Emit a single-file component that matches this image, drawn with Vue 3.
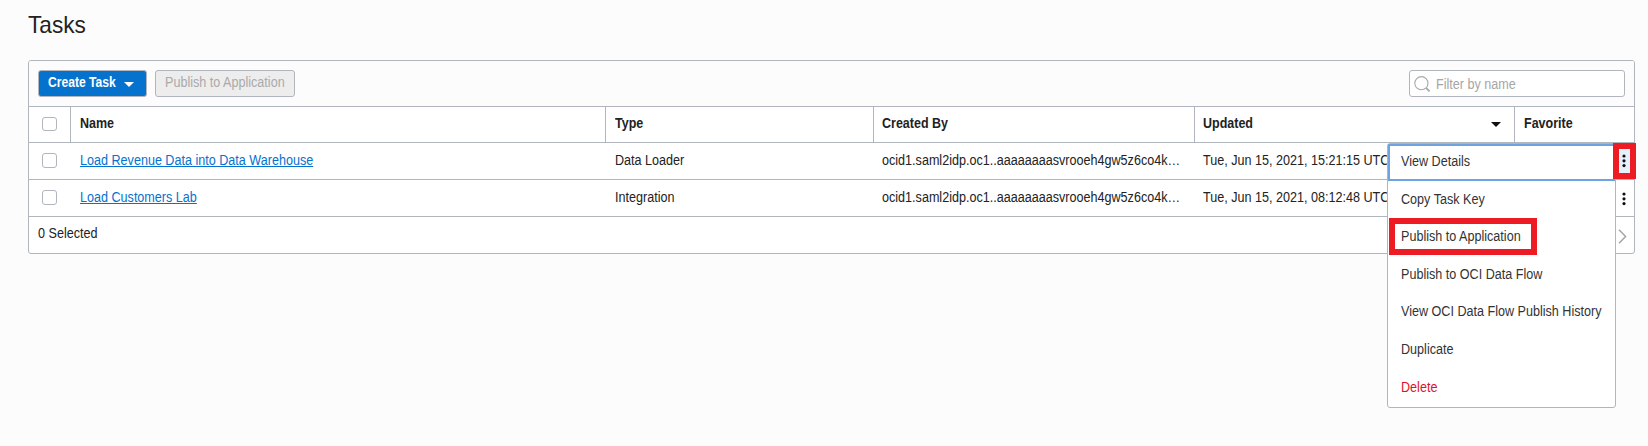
<script setup>
const rows = [
  { name: 'Load Revenue Data into Data Warehouse', type: 'Data Loader', by: 'ocid1.saml2idp.oc1..aaaaaaaasvrooeh4gw5z6co4k…', updated: 'Tue, Jun 15, 2021, 15:21:15 UTC' },
  { name: 'Load Customers Lab', type: 'Integration', by: 'ocid1.saml2idp.oc1..aaaaaaaasvrooeh4gw5z6co4k…', updated: 'Tue, Jun 15, 2021, 08:12:48 UTC' },
]
const items = ['View Details', 'Copy Task Key', 'Publish to Application', 'Publish to OCI Data Flow', 'View OCI Data Flow Publish History', 'Duplicate', 'Delete']
</script>

<template>
  <main class="page">
    <h1><span class="t">Tasks</span></h1>
    <section class="panel">
      <div class="toolbar">
        <button class="btn primary"><span class="t">Create Task</span>
          <svg width="10" height="5" viewBox="0 0 10 5"><path d="M0 0h10L5 5z" fill="#fff" /></svg>
        </button>
        <button class="btn disabled"><span class="t">Publish to Application</span></button>
        <div class="filter">
          <svg width="18" height="18" viewBox="0 0 18 18" fill="none" stroke="#a9a9a9"><circle cx="7.4" cy="7.2" r="6.6" stroke-width="1.1" /><path d="M12 11.8l3.6 3.6" stroke-width="1.8" /></svg>
          <span class="t">Filter by name</span>
        </div>
      </div>
      <div class="row head">
        <div class="check"><i class="box"></i></div>
        <div class="cell"><span class="t">Name</span></div>
        <div class="cell"><span class="t">Type</span></div>
        <div class="cell"><span class="t">Created By</span></div>
        <div class="cell sorted"><span class="t">Updated</span>
          <svg width="10" height="5" viewBox="0 0 10 5"><path d="M0 0h10L5 5z" fill="#111" /></svg>
        </div>
        <div class="cell"><span class="t">Favorite</span></div>
      </div>
      <div v-for="r in rows" :key="r.name" class="row">
        <div class="check"><i class="box"></i></div>
        <div class="cell"><a class="t">{{ r.name }}</a></div>
        <div class="cell"><span class="t">{{ r.type }}</span></div>
        <div class="cell"><span class="t">{{ r.by }}</span></div>
        <div class="cell"><span class="t">{{ r.updated }}</span></div>
        <div class="cell kebab">
          <svg width="4" height="14" viewBox="0 0 4 14" fill="#111"><circle cx="2" cy="2" r="1.6" /><circle cx="2" cy="6.8" r="1.6" /><circle cx="2" cy="11.6" r="1.6" /></svg>
        </div>
      </div>
      <div class="footer"><span class="t">0 Selected</span>
        <svg width="9" height="15" viewBox="0 0 9 15" fill="none" stroke="#a5a5a5" stroke-width="1.5"><path d="M1 .8l6.6 6.7L1 14.2" /></svg>
      </div>
    </section>
    <div class="menu">
      <div v-for="(m, i) in items" :key="m" class="item" :class="{ focused: i === 0, danger: m === 'Delete' }"><span class="t">{{ m }}</span></div>
    </div>
    <div class="mark mark-kebab">
      <svg width="4" height="14" viewBox="0 0 4 14" fill="#111"><circle cx="2" cy="2" r="1.6" /><circle cx="2" cy="6.8" r="1.6" /><circle cx="2" cy="11.6" r="1.6" /></svg>
    </div>
    <div class="mark mark-publish"></div>
  </main>
</template>

<style>
body { background: #fcfcfc; }
</style>
<style scoped>
* { box-sizing: border-box; }
.page { position: relative; width: 1648px; height: 446px; overflow: hidden; background: #fcfcfc; font: 14px/16px "Liberation Sans", Arial, sans-serif; color: #222; }
.t { display: inline-block; white-space: nowrap; transform: scaleX(.899); transform-origin: 0 50%; flex: none; }
svg { display: block; flex: none; }
h1 { margin: 0; height: 60px; padding: 11px 0 0 28px; font-size: 24px; line-height: 28px; font-weight: 400; }
h1 .t { transform: scaleX(.942); }
.panel { width: 1607px; height: 194px; margin-left: 28px; border: 1px solid #b1b5be; border-radius: 3px; background: #fff; overflow: hidden; }
.toolbar { height: 46px; display: flex; align-items: flex-start; gap: 8px; padding: 9px 9px 0; background: #fcfcfc; border-bottom: 1px solid #b1b5be; }
.btn { height: 27px; margin: 0; padding: 3px 0 0 9px; display: flex; align-items: flex-start; border: 1px solid #b1b5be; border-radius: 3px; font: inherit; }
.primary { width: 109px; background: #0572ce; color: #fff; font-weight: 700; }
.primary .t { width: 76px; text-align: left; transform: scaleX(.865); }
.primary svg { margin-top: 8px; }
.disabled { width: 140px; background: #ededed; color: #aaa; }
.filter { width: 216px; height: 27px; margin-left: auto; display: flex; align-items: flex-start; gap: 4px; padding: 5px 0 0 4px; border: 1px solid #b1b5be; border-radius: 3px; background: #fff; color: #a6a6a6; }
.row { height: 37px; display: grid; grid-template-columns: 41px 535px 268px 321px 320px 1fr; border-bottom: 1px solid #b1b5be; }
.check { padding: 10px 0 0 13px; }
.box { display: block; width: 15px; height: 15px; border: 1px solid #b1b5be; border-radius: 3px; background: #fff; }
.cell { display: flex; min-width: 0; padding: 9px 0 0 10px; }
.row .cell:nth-child(4), .row .cell:nth-child(5) { padding-left: 9px; }
.head { height: 36px; font-weight: 700; }
.head .box { height: 14px; }
.head .cell { padding-top: 8px; padding-left: 9px; border-left: 1px solid #b1b5be; }
.head .cell:nth-child(4), .head .cell:nth-child(5) { padding-left: 8px; }
.head .t { transform: scaleX(.893); }
.sorted { justify-content: space-between; }
.sorted svg { margin: 7px 13px 0 0; }
a { color: #0572ce; text-decoration: underline; text-underline-offset: 1px; }
.row .kebab { justify-content: flex-end; padding: 12px 8px 0 0; }
.footer { height: 37px; display: flex; justify-content: space-between; padding: 8px 7px 0 9px; }
.footer svg { margin-top: 4px; }
.menu { position: absolute; left: 1387px; top: 143px; width: 229px; height: 265px; border: 1px solid #b1b5be; border-radius: 3px; background: #fff; color: #333; display: flex; flex-direction: column; }
.item { height: 37.6px; padding: 9.7px 0 0 13px; }
.focused { height: 37px; padding: 7px 0 0 11px; border: 2px solid #6fa2e0; }
.danger { color: #e0102c; }
.mark { position: absolute; border: 6px solid #ed1c24; }
.mark-kebab { left: 1613px; top: 143px; width: 23px; height: 36px; background: #e6f1fc; padding: 5px 0 0 3px; }
.mark-publish { left: 1389px; top: 218px; width: 148px; height: 37px; }
</style>
